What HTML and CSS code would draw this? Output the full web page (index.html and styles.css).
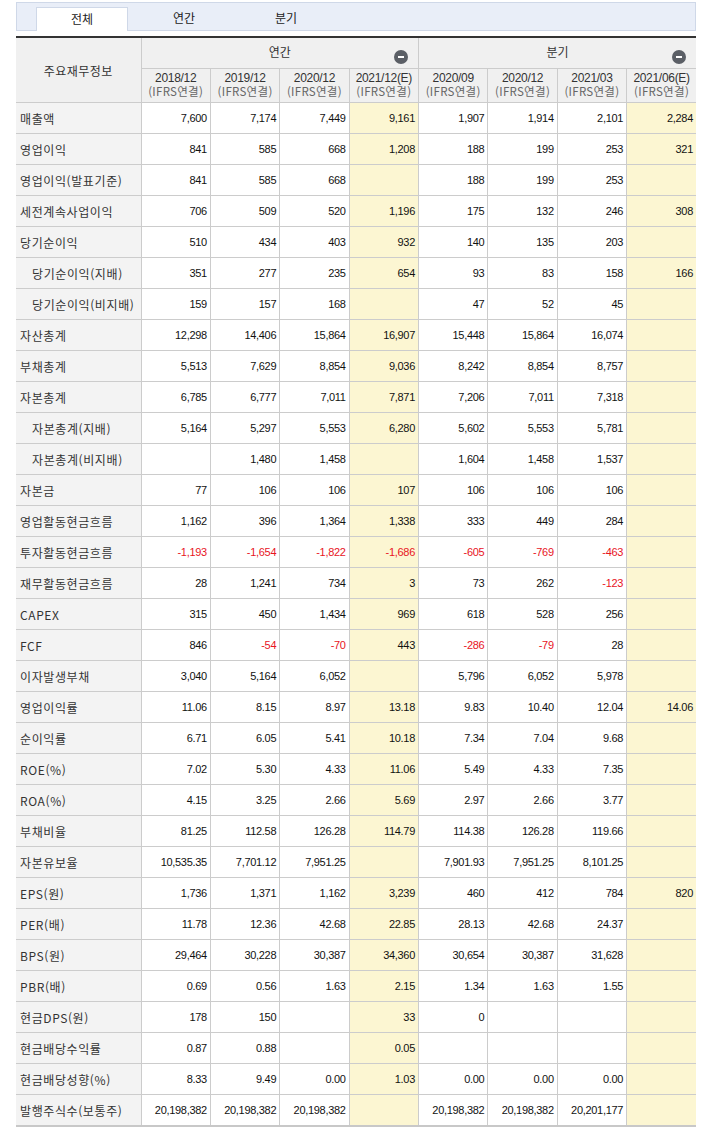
FILE: index.html
```html
<!DOCTYPE html>
<html lang="ko">
<head>
<meta charset="utf-8">
<title>주요재무정보</title>
<link rel="stylesheet" href="styles.css">
</head>
<body>
<div class="wrap">
  <div class="tabs">
    <div class="tab active">전체</div>
    <div class="tab">연간</div>
    <div class="tab">분기</div>
  </div>
  <table class="fin">
    <colgroup>
      <col class="c-label">
      <col><col><col><col><col><col><col><col>
    </colgroup>
    <thead>
      <tr class="h1">
        <th rowspan="2" class="lbl-h">주요재무정보</th>
        <th colspan="4" class="grp"><div class="grp-in"><span></span><span>연간</span><span class="minus"></span></div></th>
        <th colspan="4" class="grp"><div class="grp-in"><span></span><span>분기</span><span class="minus"></span></div></th>
      </tr>
      <tr class="h2">
        <th>2018/12<br><span class="ifrs">(IFRS연결)</span></th>
        <th>2019/12<br><span class="ifrs">(IFRS연결)</span></th>
        <th>2020/12<br><span class="ifrs">(IFRS연결)</span></th>
        <th>2021/12(E)<br><span class="ifrs">(IFRS연결)</span></th>
        <th>2020/09<br><span class="ifrs">(IFRS연결)</span></th>
        <th>2020/12<br><span class="ifrs">(IFRS연결)</span></th>
        <th>2021/03<br><span class="ifrs">(IFRS연결)</span></th>
        <th>2021/06(E)<br><span class="ifrs">(IFRS연결)</span></th>
      </tr>
    </thead>
    <tbody id="body"></tbody>
  </table>
</div>
<script src="app.js"></script>
</body>
</html>
```

FILE: app.js
```javascript
const rows = [
  ["매출액",0,["7,600","7,174","7,449","9,161","1,907","1,914","2,101","2,284"]],
  ["영업이익",0,["841","585","668","1,208","188","199","253","321"]],
  ["영업이익(발표기준)",0,["841","585","668","","188","199","253",""]],
  ["세전계속사업이익",0,["706","509","520","1,196","175","132","246","308"]],
  ["당기순이익",0,["510","434","403","932","140","135","203",""]],
  ["당기순이익(지배)",1,["351","277","235","654","93","83","158","166"]],
  ["당기순이익(비지배)",1,["159","157","168","","47","52","45",""]],
  ["자산총계",0,["12,298","14,406","15,864","16,907","15,448","15,864","16,074",""]],
  ["부채총계",0,["5,513","7,629","8,854","9,036","8,242","8,854","8,757",""]],
  ["자본총계",0,["6,785","6,777","7,011","7,871","7,206","7,011","7,318",""]],
  ["자본총계(지배)",1,["5,164","5,297","5,553","6,280","5,602","5,553","5,781",""]],
  ["자본총계(비지배)",1,["","1,480","1,458","","1,604","1,458","1,537",""]],
  ["자본금",0,["77","106","106","107","106","106","106",""]],
  ["영업활동현금흐름",0,["1,162","396","1,364","1,338","333","449","284",""]],
  ["투자활동현금흐름",0,["-1,193","-1,654","-1,822","-1,686","-605","-769","-463",""]],
  ["재무활동현금흐름",0,["28","1,241","734","3","73","262","-123",""]],
  ["CAPEX",0,["315","450","1,434","969","618","528","256",""]],
  ["FCF",0,["846","-54","-70","443","-286","-79","28",""]],
  ["이자발생부채",0,["3,040","5,164","6,052","","5,796","6,052","5,978",""]],
  ["영업이익률",0,["11.06","8.15","8.97","13.18","9.83","10.40","12.04","14.06"]],
  ["순이익률",0,["6.71","6.05","5.41","10.18","7.34","7.04","9.68",""]],
  ["ROE(%)",0,["7.02","5.30","4.33","11.06","5.49","4.33","7.35",""]],
  ["ROA(%)",0,["4.15","3.25","2.66","5.69","2.97","2.66","3.77",""]],
  ["부채비율",0,["81.25","112.58","126.28","114.79","114.38","126.28","119.66",""]],
  ["자본유보율",0,["10,535.35","7,701.12","7,951.25","","7,901.93","7,951.25","8,101.25",""]],
  ["EPS(원)",0,["1,736","1,371","1,162","3,239","460","412","784","820"]],
  ["PER(배)",0,["11.78","12.36","42.68","22.85","28.13","42.68","24.37",""]],
  ["BPS(원)",0,["29,464","30,228","30,387","34,360","30,654","30,387","31,628",""]],
  ["PBR(배)",0,["0.69","0.56","1.63","2.15","1.34","1.63","1.55",""]],
  ["현금DPS(원)",0,["178","150","","33","0","","",""]],
  ["현금배당수익률",0,["0.87","0.88","","0.05","","","",""]],
  ["현금배당성향(%)",0,["8.33","9.49","0.00","1.03","0.00","0.00","0.00",""]],
  ["발행주식수(보통주)",0,["20,198,382","20,198,382","20,198,382","","20,198,382","20,198,382","20,201,177",""]]
];
const tb = document.getElementById("body");
for (const [label, sub, vals] of rows) {
  const tr = document.createElement("tr");
  const th = document.createElement("th");
  th.className = "lbl" + (sub ? " sub" : "");
  th.textContent = label;
  tr.appendChild(th);
  vals.forEach((v, i) => {
    const td = document.createElement("td");
    let cls = "num";
    if (i === 3 || i === 7) cls += " est";
    if (v.startsWith("-")) cls += " neg";
    td.className = cls;
    td.textContent = v;
    tr.appendChild(td);
  });
  tb.appendChild(tr);
}
```

FILE: styles.css
```css
html, body {
  margin: 0;
  padding: 0;
  background: #fff;
}
body {
  font-family: "Noto Sans CJK KR", "Liberation Sans", sans-serif;
  color: #333;
}
.wrap {
  width: 680px;
  padding: 2px 0 0 16px;
}
.tabs {
  display: flex;
  gap: 10px;
  height: 29px;
  box-sizing: border-box;
  padding: 4px 0 0 19px;
  background: #e9eef8;
  border: 1px solid #cfd8e8;
  border-bottom: 1px solid #cfd8e8;
}
.tab {
  width: 92px;
  box-sizing: border-box;
  text-align: center;
  font-size: 12px;
  line-height: 22px;
  color: #222;
}
.tab.active {
  background: #fff;
  border: 1px solid #cfd8e8;
  border-bottom: none;
  height: 24px;
  margin-bottom: -1px;
}
.fin {
  margin-top: 5px;
  width: 680px;
  table-layout: fixed;
  border-collapse: collapse;
  border-top: 2px solid #333;
  border-bottom: 2px solid #c8c8c8;
}
.c-label { width: 125px; }
.fin th, .fin td {
  border: 1px solid #cccccc;
  padding: 0;
}
.fin tr > :first-child { border-left: none; }
.fin tr > :last-child { border-right: none; }
thead th {
  background: #f0f0f0;
  font-weight: normal;
  color: #333;
  font-size: 12px;
}
.h1 th.grp {
  height: 30px;
  font-size: 12px;
}
.grp-in {
  display: grid;
  grid-template-columns: 1fr auto 1fr;
  align-items: center;
}
.grp-in > span:nth-child(2) {
  margin-top: -3px;
}
.minus {
  justify-self: end;
  margin-right: 10px;
  margin-top: 8px;
  width: 14px;
  height: 14px;
  border-radius: 50%;
  background: #5b5f66;
  position: relative;
}
.minus::after {
  content: "";
  position: absolute;
  left: 4px;
  top: 6px;
  width: 6px;
  height: 2px;
  background: #fff;
}
.lbl-h {
  font-size: 12px;
  padding-bottom: 2px;
  letter-spacing: 0.5px;
}
.h2 th {
  height: 33px;
  font-family: "Liberation Sans", "Noto Sans CJK KR", sans-serif;
  font-size: 12px;
  line-height: 13px;
  color: #333;
  letter-spacing: -0.3px;
}
.ifrs {
  color: #666;
  font-family: "Noto Sans CJK KR", sans-serif;
  font-size: 11.5px;
  letter-spacing: 0.3px;
}
tbody th.lbl {
  background: #f3f3f3;
  font-weight: normal;
  text-align: left;
  font-size: 12px;
  padding-left: 4px;
  height: 30px;
  color: #333;
  white-space: nowrap;
  letter-spacing: 0.6px;
}
tbody th.lbl.sub {
  padding-left: 16px;
}
td.num {
  text-align: right;
  padding-right: 3px;
  font-family: "Liberation Sans", sans-serif;
  font-size: 11px;
  letter-spacing: -0.3px;
  color: #111;
  height: 30px;
  background: #fff;
}
td.est {
  background: #fcf6d2;
}
td.neg {
  color: #e8141e;
}
```
